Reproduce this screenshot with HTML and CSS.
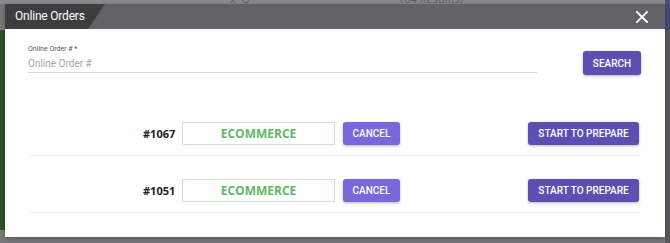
FILE: index.html
```html
<!DOCTYPE html>
<html lang="en">
<head>
    <meta charset="UTF-8">
    <meta name="viewport" content="width=device-width, initial-scale=1.0">
    <title>Online Orders</title>
    <link rel="stylesheet" href="styles.css">
</head>
<body>
    <div class="backdrop">
        <div class="page-top">
            <span class="ghost-icons">x &nbsp;Q</span>
            <span class="ghost-results">164 Result(s)</span>
        </div>
        <div class="page-left"></div>
        <div class="page-right"></div>
    </div>

    <div class="modal">
        <div class="modal-header">
            <div class="modal-title">Online Orders</div>
            <button class="close-btn" type="button" aria-label="Close">
                <svg width="12" height="12" viewBox="0 0 12 12">
                    <path d="M1 1 L11 11 M11 1 L1 11" stroke="#fff" stroke-width="1.8" stroke-linecap="square"/>
                </svg>
            </button>
        </div>

        <div class="modal-body">
            <div class="search-row">
                <div class="field">
                    <label for="orderNo">Online Order # *</label>
                    <input type="text" id="orderNo" placeholder="Online Order #">
                </div>
                <button class="btn btn-dark btn-search" type="button">SEARCH</button>
            </div>

            <div class="orders">
                <div class="order-row">
                    <div class="order-left">
                        <span class="order-no">#1067</span>
                        <span class="channel">ECOMMERCE</span>
                        <button class="btn btn-light" type="button">CANCEL</button>
                    </div>
                    <button class="btn btn-dark btn-prepare" type="button">START TO PREPARE</button>
                </div>
                <div class="order-row">
                    <div class="order-left">
                        <span class="order-no">#1051</span>
                        <span class="channel">ECOMMERCE</span>
                        <button class="btn btn-light" type="button">CANCEL</button>
                    </div>
                    <button class="btn btn-dark btn-prepare" type="button">START TO PREPARE</button>
                </div>
            </div>
        </div>
    </div>
</body>
</html>
```

FILE: styles.css
```css
body {
    margin: 0;
    width: 670px;
    height: 243px;
    overflow: hidden;
    background-color: #7b7b7d;
    font-family: "Open Sans", Arial, sans-serif;
    position: relative;
}

/* dimmed page behind the dialog */
.backdrop {
    position: absolute;
    inset: 0;
}

.page-top {
    height: 4px;
    background: #8b8b8d;
    position: relative;
    overflow: hidden;
    font-size: 11px;
    line-height: 12px;
    color: #5d5d5f;
}

.ghost-icons {
    position: absolute;
    left: 230px;
    top: -7px;
}

.ghost-results {
    position: absolute;
    left: 398px;
    top: -7px;
}

.page-left {
    position: absolute;
    left: 0;
    top: 30px;
    width: 5px;
    height: 200px;
    background: #2f5226;
}

.page-right {
    position: absolute;
    right: 0;
    top: 0;
    width: 5px;
    height: 243px;
    background: linear-gradient(#4d4a7a 0, #4d4a7a 30px, #5a5a5e 30px);
}

.modal {
    position: absolute;
    left: 5px;
    top: 4px;
    width: 660px;
    height: 233px;
    background: #ffffff;
    box-shadow: 0 2px 6px rgba(0, 0, 0, 0.3);
}

.modal-header {
    height: 25px;
    background: #636367;
    display: flex;
    align-items: center;
    justify-content: space-between;
}

.modal-title {
    height: 25px;
    width: 100px;
    box-sizing: border-box;
    padding-left: 10px;
    background: #3d3d40;
    clip-path: polygon(0 0, 100% 0, 83px 100%, 0 100%);
    color: #ffffff;
    font-family: Roboto, Arial, sans-serif;
    font-size: 12px;
    letter-spacing: -0.2px;
    line-height: 25px;
}

.close-btn {
    background: none;
    border: none;
    padding: 0;
    margin-right: 17px;
    margin-top: 1px;
    display: flex;
}

.modal-body {
    padding: 0 24px 0 23px;
}

.search-row {
    display: flex;
    align-items: flex-start;
    justify-content: space-between;
    padding-top: 16px;
}

.field {
    width: 509px;
}

.field label {
    display: block;
    font-family: Roboto, Arial, sans-serif;
    font-size: 7px;
    color: #555;
    line-height: 8px;
}

.field input {
    display: block;
    width: 100%;
    height: 20px;
    box-sizing: border-box;
    border: none;
    border-bottom: 1px solid #d6d6d6;
    padding: 5px 0 3px;
    font-family: Roboto, Arial, sans-serif;
    font-size: 10px;
    outline: none;
}

.field input::placeholder {
    color: #a8a8a8;
}

.btn {
    border: none;
    border-radius: 3px;
    color: #ffffff;
    font-family: Roboto, Arial, sans-serif;
    font-size: 10px;
    font-weight: 500;
    height: 23px;
    padding: 0 6px;
    box-shadow: 0 1px 3px rgba(0, 0, 0, 0.3);
    cursor: pointer;
}

.btn-dark {
    background-color: #5d4fb1;
}

.btn-light {
    background-color: #7a67d9;
    width: 57px;
}

.btn-search {
    width: 58px;
    height: 24px;
    margin-top: 6px;
}

.orders {
    margin: 24px 2px 0 2px;
}

.order-row {
    display: flex;
    align-items: center;
    justify-content: space-between;
    padding: 23px 0 10px;
    border-bottom: 1px solid #ececec;
}

.order-left {
    display: flex;
    align-items: center;
    margin-left: 113px;
}

.order-no {
    font-family: "Open Sans", Arial, sans-serif;
    font-weight: 700;
    font-size: 11px;
    color: #222;
    width: 32px;
    margin-right: 7px;
}

.channel {
    width: 153px;
    height: 23px;
    box-sizing: border-box;
    border: 1px solid #c9e6c9;
    color: #62b862;
    font-family: "Open Sans", Arial, sans-serif;
    font-weight: 700;
    font-size: 12px;
    line-height: 21px;
    text-align: center;
    margin-right: 8px;
}

.btn-prepare {
    width: 111px;
}
```
